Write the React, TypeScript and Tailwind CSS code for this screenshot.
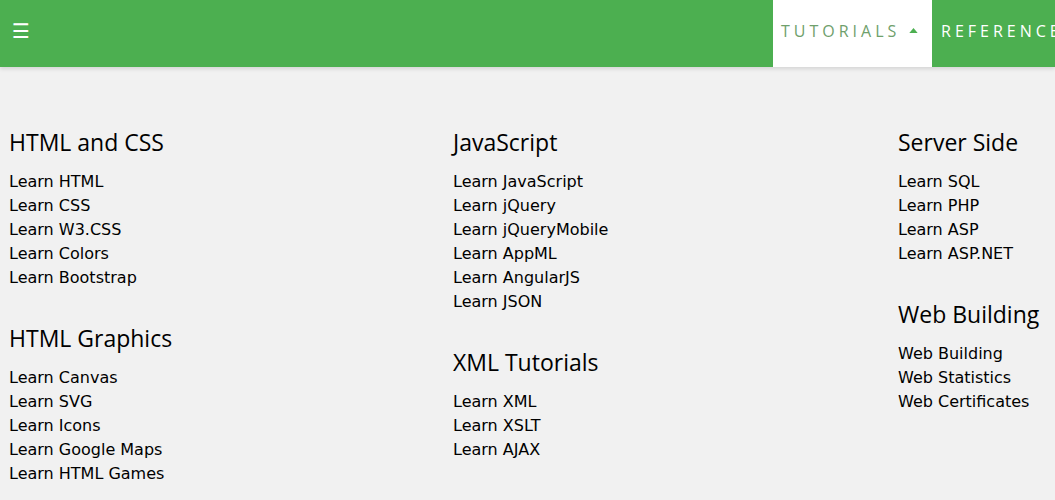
import React from 'react';

type Group = { title: string; links: string[] };

const columns: Group[][] = [
  [
    { title: 'HTML and CSS', links: ['Learn HTML', 'Learn CSS', 'Learn W3.CSS', 'Learn Colors', 'Learn Bootstrap'] },
    { title: 'HTML Graphics', links: ['Learn Canvas', 'Learn SVG', 'Learn Icons', 'Learn Google Maps', 'Learn HTML Games'] },
  ],
  [
    {
      title: 'JavaScript',
      links: ['Learn JavaScript', 'Learn jQuery', 'Learn jQueryMobile', 'Learn AppML', 'Learn AngularJS', 'Learn JSON'],
    },
    { title: 'XML Tutorials', links: ['Learn XML', 'Learn XSLT', 'Learn AJAX'] },
  ],
  [
    { title: 'Server Side', links: ['Learn SQL', 'Learn PHP', 'Learn ASP', 'Learn ASP.NET'] },
    { title: 'Web Building', links: ['Web Building', 'Web Statistics', 'Web Certificates'] },
  ],
];

export default function App() {
  return (
    <div className="min-h-[500px] bg-[#f1f1f1] overflow-hidden">
      {/* Top bar */}
      <div className="h-[67px] bg-[#4caf50] flex items-stretch shadow-[0_2px_4px_rgba(0,0,0,0.12)]">
        <button className="pl-[12px] pr-4 text-white text-[20px] leading-none pb-[6px] [font-family:'DejaVu_Sans',sans-serif]">
          ☰
        </button>
        <div className="flex-1" />
        <div className="w-[159px] bg-white flex items-center pl-[8px] pb-[6px] [font-family:'Open_Sans',sans-serif] text-[16px] tracking-[4px] text-[#6fa06c]">
          TUTORIALS
          <svg viewBox="0 0 10 6" className="w-[9px] h-[5px] ml-[9px] mb-[1px] fill-[#4caf50]">
            <path d="M0 6 L5 0 L10 6 Z" />
          </svg>
        </div>
        <div className="w-[123px] flex items-center pl-[9px] pb-[6px] [font-family:'Open_Sans',sans-serif] text-[16px] tracking-[4px] text-white whitespace-nowrap">
          REFERENCES
        </div>
      </div>

      {/* Dropdown content */}
      <div className="grid grid-cols-[444px_445px_200px] pl-[9px] pt-[57px]">
        {columns.map((col, i) => (
          <div key={i} className="flex flex-col gap-[30px]">
            {col.map((g) => (
              <div key={g.title}>
                <h3 className="text-[23px] leading-[36px] mb-[10px] text-black [font-family:'Open_Sans',sans-serif] whitespace-nowrap">
                  {g.title}
                </h3>
                <div className="flex flex-col">
                  {g.links.map((l) => (
                    <a
                      key={l}
                      className="text-[16px] leading-[24px] text-black [font-family:'DejaVu_Sans',sans-serif] whitespace-nowrap"
                    >
                      {l}
                    </a>
                  ))}
                </div>
              </div>
            ))}
          </div>
        ))}
      </div>
    </div>
  );
}
